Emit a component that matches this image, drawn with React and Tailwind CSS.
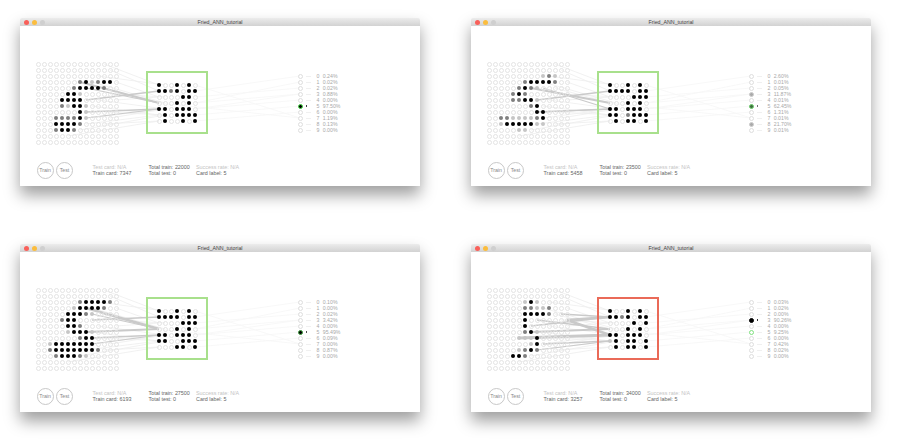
const inX = (c) => 18 + 6 * c;
const inY = (r) => 38 + 6 * r;
const hidX = (c) => 139 + 6 * c;
const hidY = (r) => 59 + 6 * r;
const outY = (i) => 50 + 6 * i;

// faint wires, the same on every window
const faintIn = [
  [11, 0, 0, 0], [12, 1, 0, 1], [9, 3, 1, 3], [11, 4, 0, 3], [12, 5, 1, 2], [10, 6, 1, 4], [13, 6, 0, 2],
  [9, 7, 0, 5], [11, 8, 1, 5], [9, 9, 0, 4], [12, 9, 1, 4], [8, 10, 0, 5], [7, 11, 1, 5], [11, 10, 0, 6],
  [5, 12, 0, 6], [13, 3, 0, 2], [10, 2, 1, 0],
];
const faintOut = [
  [6, 1, 0], [6, 2, 2], [6, 3, 3], [6, 0, 7], [6, 4, 4], [6, 4, 3], [6, 5, 5], [6, 6, 6], [0, 3, 7], [6, 3, 1],
];

const windows = [
  {
    input: [
      "..............",
      "..............",
      "..............",
      ".......x#ox##.",
      "......x####x..",
      ".....##o......",
      "....####......",
      "....xo##o.....",
      ".......#o.....",
      "...xxxx#o.....",
      "...####x......",
      "...x##x.......",
      "..............",
      "..............",
    ],
    hidden: ["#..#.#.", "##x#.##", "....##.", "...#.#.", "##.###.", ".#.####", ".#..#.#"],
    wires: [[7, 3, 0, 3, 2.2], [8, 6, 0, 1, 1.5], [8, 8, 0, 4, 1.5], [8, 4, 0, 3, 1.2], [8, 9, 0, 4, 1]],
    output: ["0.24", "0.02", "0.02", "0.88", "0.00", "97.50", "0.00", "1.19", "0.13", "0.00"],
    dots: { 5: "bg-black border-[#45d945]" },
    mark: { 5: "bg-[#444]" },
    box: "border-[#a8e08c]",
    trainCard: 7347,
    totalTrain: 22000,
  },
  {
    input: [
      "..............",
      "..............",
      ".........oxo..",
      "......x####x..",
      ".....x#xo.....",
      "....x#x.......",
      "....xx##o.....",
      ".......x#.....",
      "........##....",
      "..xxoooox#....",
      "..o#####oo....",
      ".....oo.......",
      "..............",
      "..............",
    ],
    hidden: ["#..#.#.", "####.##", "....###", "...#.#.", "##.###.", "##.x###", ".#.##.#"],
    wires: [[7, 4, 0, 3, 2.2], [8, 6, 0, 1, 1.5], [8, 8, 0, 4, 1.7], [9, 8, 0, 4, 1], [9, 4, 0, 4, 1.2]],
    output: ["2.60", "0.01", "0.05", "11.87", "0.01", "62.45", "1.31", "0.01", "21.70", "0.01"],
    dots: { 3: "bg-[#aaa] border-[#ccc]", 5: "bg-[#3f6f3f] border-[#6fce6f]", 8: "bg-[#aaa] border-[#ccc]" },
    mark: { 5: "bg-[#777]" },
    box: "border-[#a8e08c]",
    trainCard: 5458,
    totalTrain: 23500,
  },
  {
    input: [
      "..............",
      "..............",
      ".......x####x.",
      "......o####x..",
      ".....###xo....",
      "....x##.......",
      ".....##x......",
      ".....o###o....",
      ".......x##....",
      "..o#######....",
      "..x#######x...",
      "...x###xo.....",
      "..............",
      "..............",
    ],
    hidden: ["#..#.#.", "####.##", "....###", "...#.#.", "##.###.", "##..###", "...##.#"],
    wires: [[8, 3, 0, 3, 2.4], [9, 5, 0, 1, 1.5], [8, 7, 0, 3, 2.2], [9, 8, 0, 4, 1.5], [9, 9, 0, 4, 1], [9, 4, 0, 3, 1.2]],
    output: ["0.10", "0.00", "0.02", "3.42", "0.00", "95.49", "0.09", "0.00", "0.87", "0.00"],
    dots: { 5: "bg-black border-[#3c9c3c]" },
    mark: { 5: "bg-[#555]" },
    box: "border-[#a8e08c]",
    trainCard: 6193,
    totalTrain: 27500,
  },
  {
    input: [
      "..............",
      "..............",
      "......o#o.....",
      "......xxoox...",
      "......####x...",
      "......#.......",
      "......#.......",
      "......x#o.....",
      ".....ooo#.....",
      ".......o#.....",
      ".....ox#x.....",
      "....##x.......",
      "..............",
      "..............",
    ],
    hidden: ["#..#.#.", "##x#.##", "....#.#", "...#.#.", "##.###.", "o#.##.#", ".#.##.#"],
    wires: [
      [13, 5, 0, 1, 2.4], [13, 5, 0, 4, 2.4], [7, 6, 0, 1, 1.7], [5, 8, 0, 4, 2.8], [7, 7, 0, 3, 2],
      [9, 9, 0, 5, 1.5], [12, 4, 0, 1, 1.7], [8, 5, 0, 3, 1.7], [8, 10, 0, 5, 1],
    ],
    output: ["0.03", "0.02", "0.00", "90.26", "0.00", "9.25", "0.00", "0.42", "0.02", "0.00"],
    dots: { 3: "bg-black border-black", 5: "bg-white border-[#7fe07f]" },
    mark: { 3: "bg-[#333]" },
    box: "border-[#ea6a58]",
    trainCard: 3257,
    totalTrain: 34000,
  },
];

function Dot({ kind }) {
  if (kind === "#") return <div className="size-[4px] rounded-full bg-black" />;
  if (kind === "x") return <div className="size-[4px] rounded-full bg-[#7f7f7f]" />;
  if (kind === "o") return <div className="size-[4px] rounded-full bg-[#c6c6c6]" />;
  return <div className="size-[5px] rounded-full border border-[#e4e4e4]" />;
}

function DotGrid({ rows, className }) {
  return (
    <div className={className}>
      {rows.join("").split("").map((kind, i) => (
        <div key={i} className="flex size-[6px] items-center justify-center">
          <Dot kind={kind} />
        </div>
      ))}
    </div>
  );
}

function Wires({ wires }) {
  return (
    <svg className="absolute left-0 top-0 h-[160px] w-[400px]" viewBox="0 0 400 160" fill="none">
      {faintIn.map(([a, b, c, d], i) => (
        <line key={i} x1={inX(a)} y1={inY(b)} x2={hidX(c)} y2={hidY(d)} stroke="#eeeeee" strokeWidth="0.8" />
      ))}
      {faintOut.map(([c, d, o], i) => (
        <line key={i} x1={hidX(c)} y1={hidY(d)} x2={280} y2={outY(o)} stroke="#f6f6f6" strokeWidth="0.8" />
      ))}
      {wires.map(([a, b, c, d, w], i) => (
        <line key={i} x1={inX(a)} y1={inY(b)} x2={hidX(c)} y2={hidY(d)} stroke="#cacaca" strokeWidth={w} />
      ))}
    </svg>
  );
}

function Outputs({ win }) {
  return (
    <div className="ml-[90px] mt-[12px] flex flex-col">
      {win.output.map((v, i) => (
        <div key={i} className="flex h-[6px] items-center">
          <div className={`size-[5px] rounded-full border ${win.dots[i] || "border-[#dedede]"}`} />
          <div className="ml-[2.5px] flex w-[5px] items-center">
            {win.mark[i] ? <div className={`size-[1.5px] ${win.mark[i]}`} /> : <div className="h-px w-[5px] bg-[#f0f0f0]" />}
          </div>
          <span className="ml-[6px] w-[3px] text-[5.2px] leading-[6px] text-[#a8a8a8]">{i}</span>
          <span className="ml-[3.3px] text-[5.2px] leading-[6px] text-[#a8a8a8]">{v}%</span>
        </div>
      ))}
    </div>
  );
}

function RoundButton({ label }) {
  return (
    <div className="flex size-[17px] items-center justify-center rounded-full border border-[#c8c8c8] text-[5.2px] text-[#888]">
      {label}
    </div>
  );
}

function Window({ win }) {
  return (
    <div className="flex h-[168px] w-[400px] flex-col rounded-t-[2px] bg-white shadow-[0_9px_16px_rgba(0,0,0,0.38)]">
      <div className="grid h-[8px] grid-cols-[1fr_auto_1fr] items-center rounded-t-[2px] bg-gradient-to-b from-[#ececec] to-[#d2d2d2] px-[3.5px]">
        <div className="flex gap-[3.4px]">
          <div className="size-[5px] rounded-full bg-[#f9605a]" />
          <div className="size-[5px] rounded-full bg-[#fbbd3e]" />
          <div className="size-[5px] rounded-full bg-[#cfcfcf]" />
        </div>
        <span className="text-[5.3px] leading-[8px] text-[#444]">Fried_ANN_tutorial</span>
        <div />
      </div>
      <div className="relative flex h-[160px] flex-col">
        <Wires wires={win.wires} />
        <div className="relative flex items-start pl-[15px] pt-[35px]">
          <DotGrid rows={win.input} className="grid w-[84px] grid-cols-[repeat(14,6px)]" />
          <div className={`ml-[27px] mt-[9.5px] flex h-[63px] w-[62px] items-center justify-center border-2 pt-[2px] ${win.box}`}>
            <DotGrid rows={win.hidden} className="grid w-[42px] grid-cols-[repeat(7,6px)]" />
          </div>
          <Outputs win={win} />
        </div>
        <div className="relative mt-auto flex items-center pb-[7.5px] pl-[16.5px] text-[5.4px] leading-[6.5px] text-[#666] antialiased">
          <div className="flex gap-[2.5px]">
            <RoundButton label="Train" />
            <RoundButton label="Test" />
          </div>
          <div className="ml-[19.5px] flex w-[56px] flex-col">
            <span className="text-[#c4c4c4]">Test card: N/A</span>
            <span>Train card: {win.trainCard}</span>
          </div>
          <div className="flex w-[47.5px] flex-col">
            <span>Total train: {win.totalTrain}</span>
            <span>Total test: 0</span>
          </div>
          <div className="flex flex-col">
            <span className="text-[#c4c4c4]">Success rate: N/A</span>
            <span>Card label: 5</span>
          </div>
        </div>
      </div>
    </div>
  );
}

export default function App() {
  return (
    <div className="h-[440px] w-[900px] overflow-hidden bg-white pl-[20px] pt-[18px] font-['Liberation_Sans',sans-serif]">
      <div className="grid grid-cols-[400px_400px] gap-x-[51px] gap-y-[58px]">
        {windows.map((win) => (
          <Window key={win.trainCard} win={win} />
        ))}
      </div>
    </div>
  );
}
